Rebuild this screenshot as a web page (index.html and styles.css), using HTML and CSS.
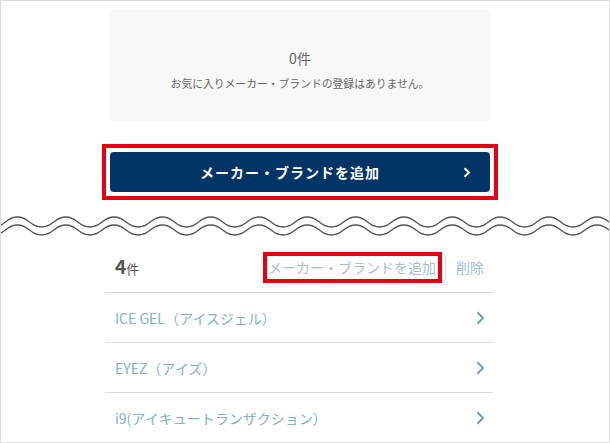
FILE: index.html
```html
<!DOCTYPE html>
<html lang="ja">
<head>
  <meta charset="UTF-8" />
  <meta name="viewport" content="width=device-width, initial-scale=1.0"/>
  <title>お気に入りメーカー・ブランド</title>
  <link rel="stylesheet" href="styles.css">
</head>
<body>
  <div class="page">

    <div class="top">
      <div class="empty">
        <p class="empty-count">0件</p>
        <p class="empty-text">お気に入りメーカー・ブランドの登録はありません。</p>
      </div>
      <div class="add-wrap">
        <a class="add-btn" href="#">
          メーカー・ブランドを追加
          <svg class="add-arrow" width="8" height="11" viewBox="0 0 8 11"><path d="M1.5 1.2l4.5 4.3-4.5 4.3" fill="none" stroke="#fff" stroke-width="2"/></svg>
        </a>
      </div>
    </div>

    <!-- wavy separator -->
    <svg class="wave" width="608" height="30" viewBox="0 0 608 30">
      <path d="M-43.9 12q12.075-10 24.15 0t24.15 0t24.15 0t24.15 0t24.15 0t24.15 0t24.15 0t24.15 0t24.15 0t24.15 0t24.15 0t24.15 0t24.15 0t24.15 0t24.15 0t24.15 0t24.15 0t24.15 0t24.15 0t24.15 0t24.15 0t24.15 0t24.15 0t24.15 0t24.15 0t24.15 0t24.15 0t24.15 0t24.15 0" fill="none" stroke="#555" stroke-width="1.3"/>
      <path d="M-43.9 20q12.075-10 24.15 0t24.15 0t24.15 0t24.15 0t24.15 0t24.15 0t24.15 0t24.15 0t24.15 0t24.15 0t24.15 0t24.15 0t24.15 0t24.15 0t24.15 0t24.15 0t24.15 0t24.15 0t24.15 0t24.15 0t24.15 0t24.15 0t24.15 0t24.15 0t24.15 0t24.15 0t24.15 0t24.15 0t24.15 0" fill="none" stroke="#555" stroke-width="1.3"/>
    </svg>

    <div class="list-section">
      <div class="list-head">
        <p class="count"><b>4</b>件</p>
        <div class="head-links">
          <a class="head-link head-add" href="#">メーカー・ブランドを追加</a>
          <span class="sep"></span>
          <a class="head-link" href="#">削除</a>
        </div>
      </div>
      <ul class="brand-list">
        <li><a href="#">ICE GEL（アイスジェル）<svg width="9" height="14" viewBox="0 0 9 14"><path d="M1.5 1.2l5.5 5.8-5.5 5.8" fill="none" stroke="#6c9fc6" stroke-width="2"/></svg></a></li>
        <li><a href="#">EYEZ（アイズ）<svg width="9" height="14" viewBox="0 0 9 14"><path d="M1.5 1.2l5.5 5.8-5.5 5.8" fill="none" stroke="#6c9fc6" stroke-width="2"/></svg></a></li>
        <li><a href="#">i9(アイキュートランザクション）<svg width="9" height="14" viewBox="0 0 9 14"><path d="M1.5 1.2l5.5 5.8-5.5 5.8" fill="none" stroke="#6c9fc6" stroke-width="2"/></svg></a></li>
      </ul>
    </div>

  </div>
</body>
</html>
```

FILE: styles.css
```css
body {
  margin: 0;
  font-family: "Noto Sans CJK JP", "Noto Sans", sans-serif;
  background: #fff;
}
p {
  margin: 0;
}
a {
  text-decoration: none;
}
.page {
  width: 610px;
  height: 443px;
  box-sizing: border-box;
  border: 1px solid #ddd;
  overflow: hidden;
}
.top, .list-section {
  width: 388px;
  margin-left: 104px;
}
.empty {
  width: 380px;
  height: 111px;
  box-sizing: border-box;
  margin: 9px 0 0 5px;
  padding-top: 38px;
  background: #f8f8f8;
  text-align: center;
  color: #666;
}
.empty-count {
  font-size: 14px;
  line-height: 20px;
}
.empty-text {
  margin-top: 7px;
  font-size: 10.8px;
  line-height: 16px;
}
.add-wrap {
  width: 396px;
  box-sizing: border-box;
  margin: 23px 0 0 -3px;
  padding: 4px;
  border: 4px solid #e50012;
}
.add-btn {
  position: relative;
  display: block;
  height: 40px;
  padding-right: 20px;
  border-radius: 4px;
  background: #033466;
  color: #fff;
  font-size: 14px;
  font-weight: bold;
  letter-spacing: 1px;
  line-height: 40px;
  text-align: center;
}
.add-arrow {
  position: absolute;
  right: 19px;
  top: 15px;
}
.wave {
  display: block;
  margin-top: 10px;
}
.list-head {
  display: flex;
  align-items: center;
  justify-content: space-between;
  height: 31px;
  margin-top: 12px;
  padding: 0 9px 9px 10px;
  border-bottom: 1px solid #ddd;
}
.count {
  color: #555;
  font-size: 13px;
  line-height: 20px;
}
.count b {
  font-size: 19px;
}
.head-links {
  display: flex;
  align-items: center;
}
.head-link {
  color: #a3bfd6;
  font-size: 14px;
  line-height: 23px;
}
.head-add {
  padding: 0 2px 0 1px;
  border: 4px solid #e50012;
}
.sep {
  width: 1px;
  height: 25px;
  margin: 0 10px 0 3px;
  background: #ddd;
}
.brand-list {
  list-style: none;
  margin: 0;
  padding: 0;
}
.brand-list li {
  border-bottom: 1px solid #ddd;
}
.brand-list a {
  display: flex;
  align-items: center;
  justify-content: space-between;
  height: 49px;
  padding: 0 8px 0 10px;
  color: #7fb1d7;
  font-size: 14px;
}
```
